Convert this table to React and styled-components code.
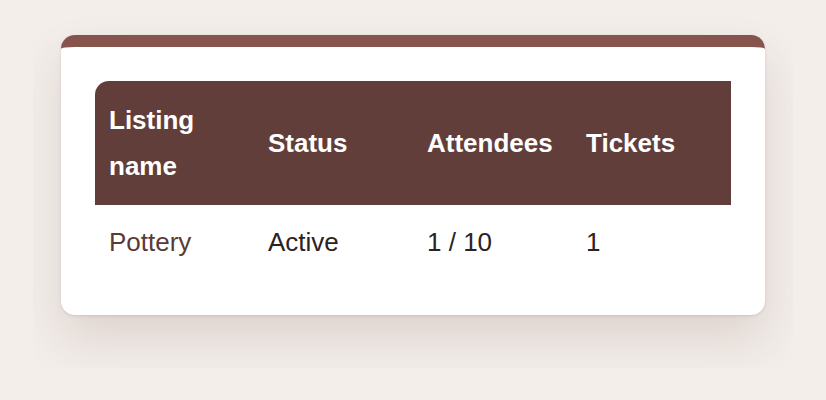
import React from 'react';
import styled, { createGlobalStyle } from 'styled-components';

const rows = [
  { name: 'Pottery', status: 'Active', attendees: '1 / 10', tickets: '1' },
];

const App = () => {
  return (
    <>
      <GlobalStyle />
      <Frame>
        <Card>
          <Table>
            <thead>
              <tr>
                <Head $first>Listing name</Head>
                <Head>Status</Head>
                <Head>Attendees</Head>
                <Head>Tickets</Head>
              </tr>
            </thead>
            <tbody>
              {rows.map((row) => (
                <tr key={row.name}>
                  <Cell $name>{row.name}</Cell>
                  <Cell>{row.status}</Cell>
                  <Cell>{row.attendees}</Cell>
                  <Cell>{row.tickets}</Cell>
                </tr>
              ))}
            </tbody>
          </Table>
        </Card>
      </Frame>
    </>
  );
};

export default App;

const GlobalStyle = createGlobalStyle`
  body {
    margin: 0;
    background: #f3eeea;
    font-family: "Liberation Sans", Arial, sans-serif;
  }
`;

const Frame = styled.div`
  margin: 7px 33px 0;
  padding: 28px 28px 53px;
  overflow: hidden;
`;

const Card = styled.div`
  background: #fff;
  border-top: 12px solid #87534d;
  border-radius: 14px;
  padding: 34px;
  box-shadow: 0 24px 48px rgba(90, 50, 40, 0.14), 0 1px 3px rgba(90, 50, 40, 0.14);
`;

const Table = styled.table`
  width: 100%;
  table-layout: fixed;
  border-collapse: collapse;
  font-size: 26px;
  line-height: 46px;
`;

const Head = styled.th`
  background: #623e3a;
  color: #fff;
  font-weight: bold;
  text-align: left;
  padding: 16px 14px;
  border-top-left-radius: ${(p) => (p.$first ? '14px' : '0')};
`;

const Cell = styled.td`
  padding: 14px 14px 16px;
  color: ${(p) => (p.$name ? '#5a3b36' : '#2a2322')};
`;
